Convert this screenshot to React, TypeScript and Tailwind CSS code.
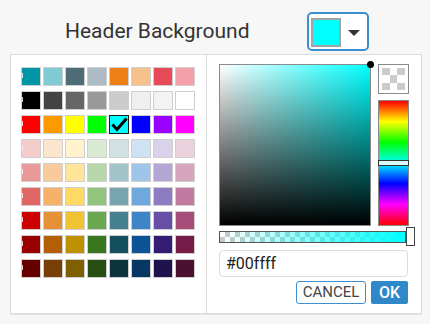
import React from "react";

const swatches: string[][] = [
  ["#0096a6", "#7fcad3", "#4e6b78", "#adbcc4", "#ee8115", "#f6c18b", "#e64a59", "#f4a0a8"],
  ["#000000", "#434343", "#666666", "#999999", "#cccccc", "#efefef", "#f3f3f3", "#ffffff"],
  ["#ff0000", "#ff9900", "#ffff00", "#00ff00", "#00ffff", "#0000ff", "#9900ff", "#ff00ff"],
  ["#f4cccc", "#fce5cd", "#fff2cc", "#d9ead3", "#d0e0e3", "#cfe2f3", "#d9d2e9", "#ead1dc"],
  ["#ea9999", "#f9cb9c", "#ffe599", "#b6d7a8", "#a2c4c9", "#9fc5e8", "#b4a7d6", "#d5a6bd"],
  ["#e06666", "#f6b26b", "#ffd966", "#93c47d", "#76a5af", "#6fa8dc", "#8e7cc3", "#c27ba0"],
  ["#cc0000", "#e69138", "#f1c232", "#6aa84f", "#45818e", "#3d85c6", "#674ea7", "#a64d79"],
  ["#990000", "#b45f06", "#bf9000", "#38761d", "#134f5c", "#0b5394", "#351c75", "#741b47"],
  ["#660000", "#783f04", "#7f6000", "#274e13", "#0c343d", "#073763", "#20124d", "#4c1130"],
];

const selected = "#00ffff";

export default function App() {
  return (
    <div className="w-[430px] h-[324px] bg-[#f7f7f7] pt-[12px] font-['Roboto',sans-serif] overflow-hidden">
      {/* Header */}
      <div className="flex items-center h-[39px]">
        <div className="w-[307px] pl-[65px] text-[21px] text-[#333] leading-none">Header Background</div>
        <button className="flex items-start w-[62px] h-[39px] border-2 border-[#3a8fd0] rounded-[5px] bg-white pl-[2px] pt-[4px]">
          <span className="w-[30px] h-[29px] border-2 border-[#a3a3a3]" style={{ backgroundColor: selected }} />
          <span className="flex-1 flex justify-center pt-[12px]">
            <svg width="12" height="6" viewBox="0 0 12 6">
              <path d="M0 0 L12 0 L6 6 Z" fill="#333" />
            </svg>
          </span>
        </button>
      </div>

      {/* Picker panel */}
      <div className="ml-[10px] mt-[3px] w-[412px] h-[260px] flex bg-white border border-[#dcdcdc] shadow-[0_1px_0_#e2e2e2]">
        {/* Palette */}
        <div className="w-[197px] border-r border-[#dcdcdc] pl-[10px] pt-[12px]">
          <div className="grid grid-cols-[repeat(8,20px)] auto-rows-[19px] gap-x-[2px] gap-y-[5px]">
            {swatches.flatMap((row, r) =>
              row.map((c, i) => {
                const isSel = c === selected;
                return (
                  <div
                    key={r + "-" + i}
                    className={
                      isSel
                        ? "relative flex items-center justify-center border-[1.5px] border-[#1a1a1a]"
                        : "relative border border-[#cfcfcf]"
                    }
                    style={{ backgroundColor: c }}
                  >
                    {i === 0 && <span className="absolute left-0 top-[5px] w-[1px] h-[5px] bg-white/80" />}
                    {isSel && (
                      <svg width="17" height="15" viewBox="0 0 17 15">
                        <path d="M1.5 7.5 L6 12.5 L15.5 1.5" fill="none" stroke="#000" strokeWidth="3" />
                      </svg>
                    )}
                  </div>
                );
              })
            )}
          </div>
        </div>

        {/* Custom picker */}
        <div className="flex-1 pl-[12px] pt-[9px] pr-[12px] flex flex-col">
          <div className="flex gap-[7px]">
            <div className="relative w-[152px] h-[162px] border border-[#8a8a8a] bg-[#00ffff]">
              <div className="absolute inset-0 bg-linear-to-r from-white to-transparent" />
              <div className="absolute inset-0 bg-linear-to-b from-transparent to-black" />
              <span className="absolute right-[-4px] top-[-4px] w-[7px] h-[7px] rounded-full bg-black" />
            </div>
            <div className="flex flex-col gap-[6px] w-[31px]">
              <div className="h-[30px] border border-[#8a8a8a] bg-white p-[3px]">
                <div className="grid grid-cols-3 grid-rows-3 w-full h-full">
                  {[1, 0, 1, 0, 1, 0, 1, 0, 1].map((g, k) => (
                    <div key={k} className={g ? "bg-[#cccccc]" : "bg-white"} />
                  ))}
                </div>
              </div>
              <div className="relative h-[126px] border border-[#8a8a8a] bg-[linear-gradient(to_bottom,#ff0000,#ffff00,#00ff00,#00ffff,#0000ff,#ff00ff,#ff0000)]">
                <span className="absolute left-[-1px] right-[-1px] top-[59px] h-[6px] border border-[#333] bg-[#d8fcfc]" />
              </div>
            </div>
          </div>

          {/* Alpha slider */}
          <div className="relative mt-[5px] w-[187px] h-[12px] border border-[#555] [background-image:linear-gradient(to_right,rgba(0,255,255,0),#00ffff),repeating-conic-gradient(#c8c8c8_0%_25%,#ffffff_0%_50%)] [background-size:100%_100%,10px_10px]">
            <span className="absolute right-[-10px] top-[-5px] w-[9px] h-[19px] border border-[#444] bg-white" />
          </div>

          {/* Hex input */}
          <div className="mt-[7px] h-[27px] w-[189px] border border-[#dcdcdc] rounded-[4px] flex items-center pl-[6px] text-[16px] text-[#222]">
            #00ffff
          </div>

          {/* Actions */}
          <div className="mt-[4px] flex justify-end gap-[5px] w-[189px]">
            <button className="w-[70px] h-[23px] border border-[#3d8fd0] rounded-[3px] bg-white text-[15px] text-[#444] leading-none">
              CANCEL
            </button>
            <button className="w-[37px] h-[23px] rounded-[2px] bg-[#2f88c8] text-[16px] font-medium text-white leading-none">
              OK
            </button>
          </div>
        </div>
      </div>
    </div>
  );
}
